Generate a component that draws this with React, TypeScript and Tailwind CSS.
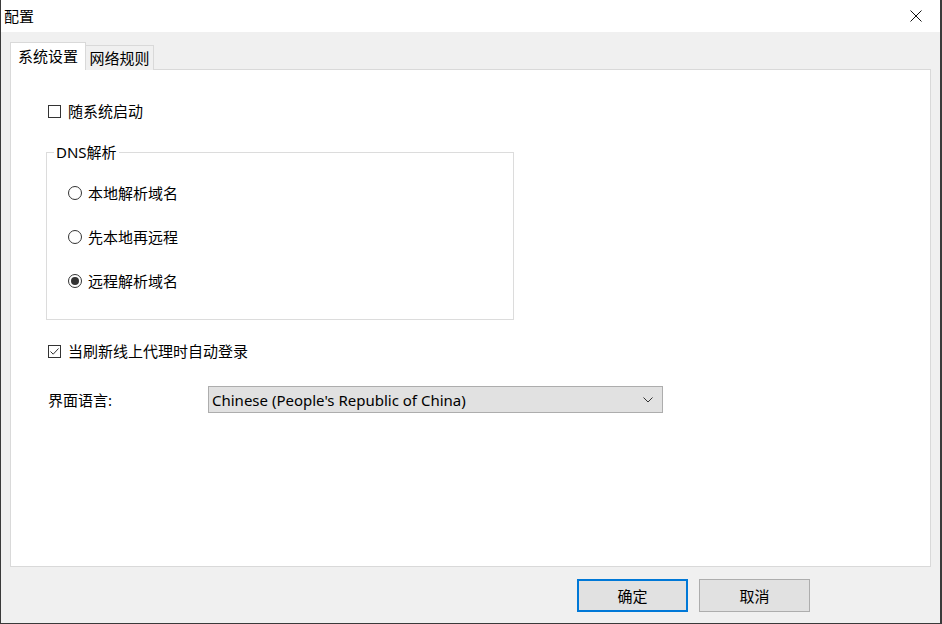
import React, { useState } from "react";

const FONT = "font-['Noto_Sans','Noto_Sans_CJK_SC',sans-serif]";

const CheckBox = ({ checked, label }: { checked: boolean; label: string }) => (
  <div className="flex items-center h-[20px] ml-[2px]">
    <span className="w-[13px] h-[13px] border border-[#333] bg-white flex items-center justify-center">
      {checked && (
        <svg width="11" height="11" viewBox="0 0 11 11">
          <path d="M1.5 5.5 L4.2 8.2 L9.5 2.5" fill="none" stroke="#333" strokeWidth="1" />
        </svg>
      )}
    </span>
    <span className="ml-[7px]">{label}</span>
  </div>
);

const Radio = ({ checked, label }: { checked: boolean; label: string }) => (
  <div className="flex items-center h-[20px]">
    <span className="w-[14px] h-[14px] rounded-full border border-[#333] bg-white flex items-center justify-center">
      {checked && <span className="w-[8px] h-[8px] rounded-full bg-[#333]" />}
    </span>
    <span className="ml-[6px]">{label}</span>
  </div>
);

export default function App() {
  const [tab, setTab] = useState(0);
  const dns = ["本地解析域名", "先本地再远程", "远程解析域名"];

  return (
    <div
      className={`w-[942px] h-[624px] flex flex-col border-l border-r-2 border-b border-[#3a3a3a] text-[15px] text-black leading-[20px] ${FONT}`}
    >
      {/* TITLE BAR */}
      <div className="h-[32px] bg-white flex items-center pl-[3px] shrink-0">
        <span className="flex-1">配置</span>
        <div className="w-[46px] h-[32px] flex items-center justify-center mr-[1px]">
          <svg width="12" height="12" viewBox="0 0 12 12">
            <path d="M0.5 0.5 L11.5 11.5 M11.5 0.5 L0.5 11.5" stroke="#111" strokeWidth="1" />
          </svg>
        </div>
      </div>

      {/* BODY */}
      <div className="flex-1 bg-[#f0f0f0] flex flex-col px-[9px] pt-[10px] pb-[11px]">
        {/* TABS */}
        <div className="flex items-end h-[27px] relative z-10">
          <button
            onClick={() => setTab(0)}
            className="h-[28px] w-[76px] bg-white border border-b-0 border-[#d9d9d9] flex items-center justify-center -mb-[1px] pb-[2px]"
          >
            系统设置
          </button>
          <button
            onClick={() => setTab(1)}
            className="h-[25px] w-[68px] bg-[#f0f0f0] border border-l-0 border-b-0 border-[#d9d9d9] flex items-center justify-center -mb-[1px]"
          >
            网络规则
          </button>
        </div>

        {/* PANEL */}
        <div className="flex-1 bg-white border border-[#d9d9d9] pl-[35px] pt-[31px] flex flex-col">
          {tab === 0 && (
            <>
              <CheckBox checked={false} label="随系统启动" />

              <fieldset className="mt-[21px] w-[468px] h-[178px] border border-[#dcdcdc] pl-[7px]">
                <legend className="px-[2px]">DNS解析</legend>
                <div className="flex flex-col gap-[24px] mt-[21px] pl-[14px]">
                  {dns.map((d, i) => (
                    <Radio key={d} checked={i === 2} label={d} />
                  ))}
                </div>
              </fieldset>

              <div className="mt-[21px]">
                <CheckBox checked={true} label="当刷新线上代理时自动登录" />
              </div>

              <div className="mt-[25px] flex items-center h-[27px]">
                <span className="w-[160px] ml-[2px]">界面语言:</span>
                <div className="w-[455px] h-[27px] bg-[#e1e1e1] border border-[#adadad] flex items-center pl-[3px] pr-[9px]">
                  <span className="flex-1">Chinese (People's Republic of China)</span>
                  <svg width="10" height="6" viewBox="0 0 10 6">
                    <path d="M0.5 0.5 L5 5 L9.5 0.5" fill="none" stroke="#333" strokeWidth="1" />
                  </svg>
                </div>
              </div>
            </>
          )}
        </div>

        {/* BUTTONS */}
        <div className="flex justify-end gap-[11px] mt-[12px] pr-[121px]">
          <button className="w-[111px] h-[33px] bg-[#e1e1e1] border-2 border-[#0078d7]">确定</button>
          <button className="w-[111px] h-[33px] bg-[#e1e1e1] border border-[#adadad]">取消</button>
        </div>
      </div>
    </div>
  );
}
